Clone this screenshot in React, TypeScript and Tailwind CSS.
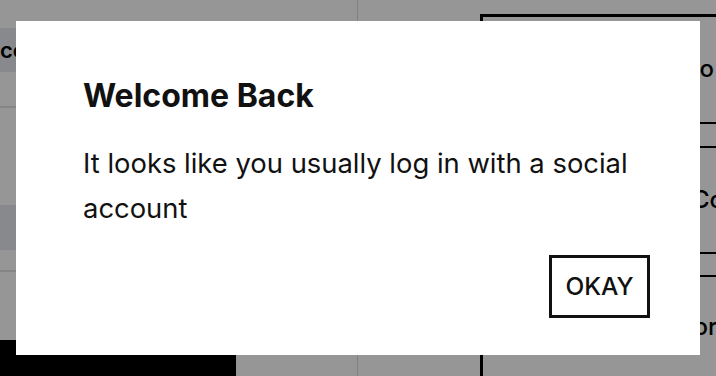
import React from 'react';

function Background() {
  return (
    <div className="flex h-[376px] w-[716px] bg-white text-black" style={{ fontFamily: 'Inter, "Noto Sans", sans-serif' }}>
      {/* left list */}
      <div className="flex w-[358px] shrink-0 flex-col border-r border-[#dcdcdc]">
        <div className="h-[28px]" />
        <div className="flex h-[44px] items-center bg-[#e6e9f0] text-[22px] font-semibold">cc</div>
        <div className="h-[36px] border-b-2 border-[#e2e2e2]" />
        <div className="h-[97px]" />
        <div className="h-[45px] bg-[#e6e9f0]" />
        <div className="h-[22px] border-b-2 border-[#e2e2e2]" />
        <div className="flex-1" />
        <div className="h-[36px] w-[236px] bg-black" />
      </div>
      {/* right side */}
      <div className="flex min-w-0 flex-1 pl-[122px] pt-[14px]">
        <div className="flex min-w-0 flex-1 flex-col overflow-hidden whitespace-nowrap border-l-[3px] border-t-[3px] border-black text-[24px] font-medium">
          <div className="flex h-[106px] items-center pl-[199px]">Co</div>
          <div className="h-[26px] border-y-2 border-black" />
          <div className="flex h-[106px] items-center pl-[209px]">Co</div>
          <div className="h-[25px] border-y-2 border-black" />
          <div className="flex h-[100px] items-center pl-[193px]">Cor</div>
        </div>
      </div>
    </div>
  );
}

export default function App() {
  return (
    <div className="relative h-[376px] w-[716px] overflow-hidden">
      <Background />
      <div className="absolute inset-0 flex items-center justify-center bg-black/[0.41] px-4">
        <div
          className="flex h-[334px] w-full flex-col bg-white pb-[37px] pl-[67px] pr-[50px] pt-[56px] text-[#111]"
          style={{ fontFamily: 'Inter, "Noto Sans", sans-serif' }}
        >
          <h2 className="text-[32px] font-bold leading-[38px]">Welcome Back</h2>
          <p className="mt-[26px] text-[27.4px] leading-[45px]">
            It looks like you usually log in with a social account
          </p>
          <div className="mt-auto flex justify-end">
            <button className="flex h-[63px] w-[101px] items-center justify-center border-[3px] border-[#111] text-[24.5px] font-medium">
              OKAY
            </button>
          </div>
        </div>
      </div>
    </div>
  );
}
